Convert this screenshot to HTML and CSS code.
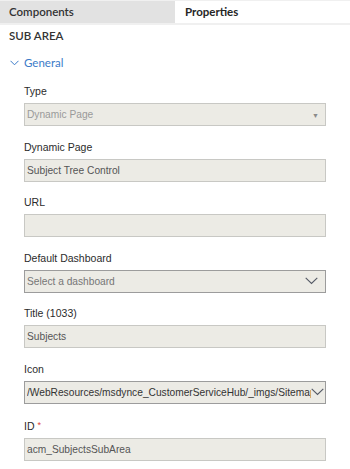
FILE: index.html
```html
<!DOCTYPE html>
<html>
<head>
<meta charset="utf-8">
<link rel="stylesheet" href="styles.css">
</head>
<body>
<div class="tabs">
  <div class="tab tab-inactive">Components</div>
  <div class="tab tab-active">Properties</div>
</div>
<div class="panel">
  <div class="section-title">SUB AREA</div>
  <div class="group-header">
    <svg class="group-chevron" width="9" height="6" viewBox="0 0 9 6"><path d="M0.5 0.8 L4.5 4.8 L8.5 0.8" fill="none" stroke="#3b7bc8" stroke-width="1"/></svg>
    <span>General</span>
  </div>
  <div class="fields">
    <div class="field">
      <div class="label">Type</div>
      <div class="box box-disabled">
        <span class="value value-disabled">Dynamic Page</span>
        <span class="tri">&#9660;</span>
      </div>
    </div>
    <div class="field">
      <div class="label">Dynamic Page</div>
      <div class="box"><span class="value">Subject Tree Control</span></div>
    </div>
    <div class="field">
      <div class="label">URL</div>
      <div class="box"><span class="value"></span></div>
    </div>
    <div class="field">
      <div class="label">Default Dashboard</div>
      <div class="box box-select">
        <span class="value value-placeholder">Select a dashboard</span>
        <svg class="chev" width="13" height="8" viewBox="0 0 13 8"><path d="M0.7 0.8 L6.5 6.5 L12.3 0.8" fill="none" stroke="#555a66" stroke-width="1.1"/></svg>
      </div>
    </div>
    <div class="field">
      <div class="label">Title (1033)</div>
      <div class="box"><span class="value">Subjects</span></div>
    </div>
    <div class="field">
      <div class="label">Icon</div>
      <div class="box box-select box-icon">
        <span class="value value-dark clip">/WebResources/msdynce_CustomerServiceHub/_imgs/Sitemap/Subjects.png</span>
        <svg class="chev chev-tight" width="13" height="8" viewBox="0 0 13 8"><path d="M0.7 0.8 L6.5 6.5 L12.3 0.8" fill="none" stroke="#555a66" stroke-width="1.1"/></svg>
      </div>
    </div>
    <div class="field">
      <div class="label">ID <span class="req">*</span></div>
      <div class="box"><span class="value">acm_SubjectsSubArea</span></div>
    </div>
  </div>
</div>
</body>
</html>
```
FILE: styles.css
```css
html, body {
  margin: 0;
  padding: 0;
  background: #ffffff;
}
body {
  width: 350px;
  height: 469px;
  overflow: hidden;
  font-family: Lato, "Open Sans", sans-serif;
  color: #333333;
}
.tabs {
  display: flex;
  height: 22px;
  border-top: 1px solid #f0f0f0;
  border-bottom: 2px solid #f0f0f0;
}
.tab {
  flex: 0 0 175px;
  box-sizing: border-box;
  font-size: 11.5px;
  line-height: 21px;
}
.tab-inactive {
  background: #e2e2e2;
  padding-left: 9px;
  font-weight: 600;
  color: #333;
}
.tab-active {
  background: #ffffff;
  padding-left: 10px;
  font-weight: 700;
  color: #262626;
}
.section-title {
  font-size: 11.5px;
  font-weight: 600;
  line-height: 16px;
  padding-left: 9px;
  margin-top: 3px;
  color: #333;
}
.group-header {
  display: flex;
  align-items: center;
  margin-top: 10px;
  padding-left: 10px;
  height: 16px;
  font-size: 11.5px;
  color: #3b7bc8;
}
.group-chevron {
  margin-right: 5px;
  margin-top: 1px;
}
.fields {
  padding-left: 24px;
  width: 302px;
  margin-top: 13px;
}
.field {
  margin-bottom: 12.6px;
}
.label {
  font-family: "Liberation Sans", Arial, sans-serif;
  font-size: 10.5px;
  line-height: 16px;
  color: #2b2b2b;
  margin-bottom: 4px;
}
.req {
  color: #e0413a;
  font-size: 9px;
  vertical-align: 2px;
}
.box {
  box-sizing: border-box;
  height: 23px;
  border: 1px solid #c8c8c4;
  background: #ecebe5;
  display: flex;
  align-items: center;
  padding-left: 2px;
  padding-right: 6px;
}
.box-select {
  border-color: #9c9c9c;
}
.box-icon {
  padding-right: 1px;
}
.value {
  font-family: "Liberation Sans", Arial, sans-serif;
  font-size: 10.2px;
  color: #555555;
  white-space: nowrap;
  flex: 1 1 auto;
  min-width: 0;
}
.value-disabled {
  color: #9a9a9a;
}
.value-placeholder {
  color: #767676;
}
.value-dark {
  color: #333333;
}
.clip {
  overflow: hidden;
}
.tri {
  font-size: 7px;
  color: #8a8a8a;
  margin-right: 0;
}
.chev {
  flex: 0 0 auto;
  margin-right: 1px;
}
.chev-tight {
  margin-right: 0;
  margin-left: 0;
}
```
